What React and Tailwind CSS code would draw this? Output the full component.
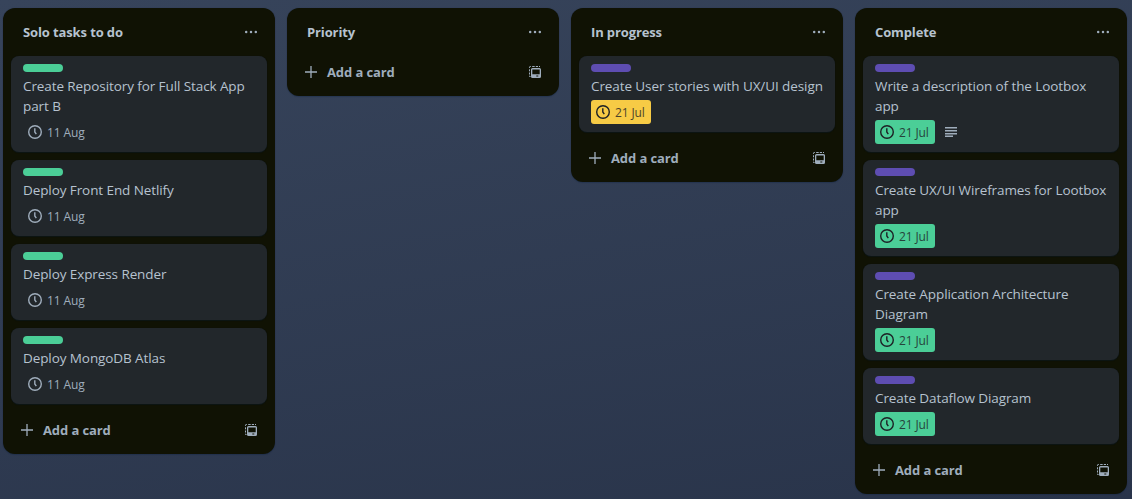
const LISTS = [
  {
    title: 'Solo tasks to do',
    cards: [
      { title: 'Create Repository for Full Stack App part B', label: 'green', date: '11 Aug' },
      { title: 'Deploy Front End Netlify', label: 'green', date: '11 Aug' },
      { title: 'Deploy Express Render', label: 'green', date: '11 Aug' },
      { title: 'Deploy MongoDB Atlas', label: 'green', date: '11 Aug' },
    ],
  },
  { title: 'Priority', cards: [] },
  {
    title: 'In progress',
    cards: [{ title: 'Create User stories with UX/UI design', label: 'purple', date: '21 Jul', status: 'soon' }],
  },
  {
    title: 'Complete',
    cards: [
      { title: 'Write a description of the Lootbox app', label: 'purple', date: '21 Jul', status: 'done', description: true },
      { title: 'Create UX/UI Wireframes for Lootbox app', label: 'purple', date: '21 Jul', status: 'done' },
      { title: 'Create Application Architecture Diagram', label: 'purple', date: '21 Jul', status: 'done' },
      { title: 'Create Dataflow Diagram', label: 'purple', date: '21 Jul', status: 'done' },
    ],
  },
];

const LABELS = { green: 'bg-[#4bce97]', purple: 'bg-[#5e4db2]' };

const BADGES = {
  none: 'text-[#9fadbc]',
  soon: 'bg-[#f7cb45] text-[#1d2125]',
  done: 'bg-[#4bce97] text-[#1d2125]',
};

function ClockIcon() {
  return (
    <svg className="size-4 shrink-0" viewBox="0 0 16 16" fill="none" stroke="currentColor" strokeWidth="1.4">
      <circle cx="8" cy="8" r="6.3" />
      <path d="M7.8 4.2V8l1.5 2.2" />
    </svg>
  );
}

function DescriptionIcon() {
  return (
    <svg className="size-4 shrink-0" viewBox="0 0 16 16" fill="currentColor">
      <path d="M2 3h12v1.4H2zM2 6h12v1.4H2zM2 9h12v1.4H2zM2 11.6h8V13H2z" />
    </svg>
  );
}

function MoreIcon() {
  return (
    <svg className="size-4 shrink-0" viewBox="0 0 16 16" fill="currentColor">
      <circle cx="3.2" cy="8" r="1.25" />
      <circle cx="8" cy="8" r="1.25" />
      <circle cx="12.8" cy="8" r="1.25" />
    </svg>
  );
}

function PlusIcon() {
  return (
    <svg className="size-4 shrink-0" viewBox="0 0 16 16" fill="none" stroke="currentColor" strokeWidth="1.3">
      <path d="M8 2v12M2 8h12" />
    </svg>
  );
}

function TemplateIcon() {
  return (
    <svg className="size-4 shrink-0" viewBox="0 0 16 16" fill="none" stroke="currentColor">
      <path d="M2.5 4V3.2Q2.5 2.5 3.3 2.5H4M5.2 2.5h2.5M8.8 2.5h2.2M12 2.5h1M2.5 5.3v2M2.5 8.5v2M2.5 11.7v.8h1" />
      <path
        d="M5.5 4h7A1.5 1.5 0 0 1 14 5.5v7a1.5 1.5 0 0 1-1.5 1.5h-7A1.5 1.5 0 0 1 4 12.5v-7A1.5 1.5 0 0 1 5.5 4zM5.3 5.4v4.8h7.4V5.4zM9.3 11.4v1h2v-1z"
        fill="currentColor"
        fillRule="evenodd"
        stroke="none"
      />
    </svg>
  );
}

function Card({ card }) {
  return (
    <li className="rounded-lg bg-[#22272b] px-3 py-2 shadow-[0_1px_1px_#091e4240,0_0_1px_#091e424f]">
      <div className={`mb-1 h-2 w-10 rounded ${LABELS[card.label]}`} />
      <p className="mb-1 text-[13.5px] leading-5 tracking-[-0.09px] text-[#b6c2cf]">{card.title}</p>
      <div className="flex gap-2 text-[#9fadbc]">
        <div className={`flex h-6 w-15 items-center gap-1 rounded-[3px] pl-1 text-xs tracking-[-0.12px] ${BADGES[card.status || 'none']}`}>
          <ClockIcon />
          <span className={`whitespace-nowrap pt-0.5 ${card.status ? 'opacity-80' : ''}`}>{card.date}</span>
        </div>
        {card.description && (
          <div className="flex items-center">
            <DescriptionIcon />
          </div>
        )}
      </div>
    </li>
  );
}

function List({ list }) {
  return (
    <section className="w-68 shrink-0 rounded-xl bg-[#101204] px-2 pb-2 text-[#9fadbc] shadow-[0_1px_1px_#091e4240,0_0_1px_#091e424f]">
      <header className="flex h-12 items-center justify-between pl-3 pr-2">
        <h2 className="text-[13px] font-bold leading-5 tracking-[-0.12px] text-[#b6c2cf]">{list.title}</h2>
        <button aria-label="List actions"><MoreIcon /></button>
      </header>
      {list.cards.length > 0 && (
        <ol className="mb-2.5 flex flex-col gap-2">
          {list.cards.map((card) => <Card key={card.title} card={card} />)}
        </ol>
      )}
      <footer className="flex h-8 items-center justify-between px-2">
        <button className="flex items-center gap-2 text-[13px] font-bold leading-5 tracking-[-0.1px]">
          <PlusIcon />
          Add a card
        </button>
        <button aria-label="Create from template"><TemplateIcon /></button>
      </footer>
    </section>
  );
}

export default function App() {
  return (
    <main className="flex h-[499px] w-[1132px] items-start gap-3 overflow-hidden bg-linear-[170deg] from-[#37445b] to-[#29344a] pl-[3px] pt-2 font-['Open_Sans','Noto_Sans',sans-serif]">
      {LISTS.map((list) => <List key={list.title} list={list} />)}
    </main>
  );
}
